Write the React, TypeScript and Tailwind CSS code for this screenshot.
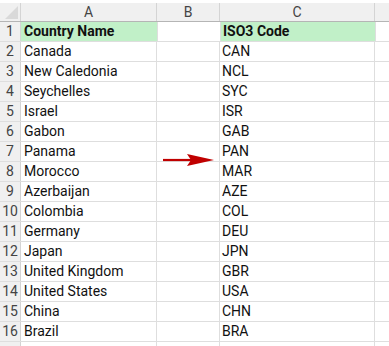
import React from "react";

const rows: [string, string][] = [
  ["Canada", "CAN"],
  ["New Caledonia", "NCL"],
  ["Seychelles", "SYC"],
  ["Israel", "ISR"],
  ["Gabon", "GAB"],
  ["Panama", "PAN"],
  ["Morocco", "MAR"],
  ["Azerbaijan", "AZE"],
  ["Colombia", "COL"],
  ["Germany", "DEU"],
  ["Japan", "JPN"],
  ["United Kingdom", "GBR"],
  ["United States", "USA"],
  ["China", "CHN"],
  ["Brazil", "BRA"],
];

export default function App() {
  return (
    <div className="relative w-[389px] h-[346px] overflow-hidden bg-white text-[14px] text-[#111]" style={{ fontFamily: "Roboto, 'Liberation Sans', sans-serif" }}>
      <div className="h-[3px]" />
      {/* Column header */}
      <div className="flex h-[19px] bg-[#f0f0f0] border-b border-[#b5b5b5] text-[#444]">
        <div className="relative w-[21px] shrink-0 border-r border-[#d4d4d4]">
          <div className="absolute right-[2px] bottom-[2px] w-0 h-0 border-l-[13px] border-l-transparent border-b-[13px] border-b-[#d9d9d9]" />
        </div>
        <div className="w-[136px] shrink-0 border-r border-[#d4d4d4] flex items-center justify-center">A</div>
        <div className="w-[63px] shrink-0 border-r border-[#d4d4d4] flex items-center justify-center">B</div>
        <div className="w-[155px] shrink-0 border-r border-[#d4d4d4] flex items-center justify-center">C</div>
        <div className="flex-1" />
      </div>
      {/* Header data row */}
      <div className="flex h-[20px] border-b border-[#dedede]">
        <div className="w-[21px] shrink-0 bg-[#f0f0f0] border-r border-[#d4d4d4] flex items-center justify-center text-[#444]">1</div>
        <div className="w-[136px] shrink-0 bg-[#c1f0c8] flex items-center pl-[3px] font-bold">Country Name</div>
        <div className="w-[64px] shrink-0 border-l border-r border-[#dedede]" />
        <div className="w-[154px] shrink-0 bg-[#c1f0c8] flex items-center pl-[2px] font-bold">ISO3 Code</div>
        <div className="flex-1 border-l border-[#dedede]" />
      </div>
      {rows.map(([name, code], i) => (
        <div key={code} className="flex h-[20px] border-b border-[#dedede]">
          <div className="w-[21px] shrink-0 bg-[#f0f0f0] border-r border-[#d4d4d4] flex items-center justify-center text-[#444]">{i + 2}</div>
          <div className="w-[136px] shrink-0 border-r border-[#dedede] flex items-center pl-[3px]">{name}</div>
          <div className="w-[63px] shrink-0 border-r border-[#dedede]" />
          <div className="w-[155px] shrink-0 border-r border-[#dedede] flex items-center pl-[2px]">{code}</div>
          <div className="flex-1" />
        </div>
      ))}
      <div className="flex h-[20px]">
        <div className="w-[21px] shrink-0 bg-[#f0f0f0] border-r border-[#d4d4d4]" />
        <div className="w-[136px] shrink-0 border-r border-[#dedede]" />
        <div className="w-[63px] shrink-0 border-r border-[#dedede]" />
        <div className="w-[155px] shrink-0 border-r border-[#dedede]" />
        <div className="flex-1" />
      </div>
      <svg className="absolute left-[162px] top-[153px]" width="54" height="14" viewBox="0 0 54 14">
        <line x1="1" y1="7" x2="30" y2="7" stroke="#c00000" strokeWidth="2.2" />
        <polygon points="25,1 52,7 25,13 29,7" fill="#c00000" />
      </svg>
    </div>
  );
}
